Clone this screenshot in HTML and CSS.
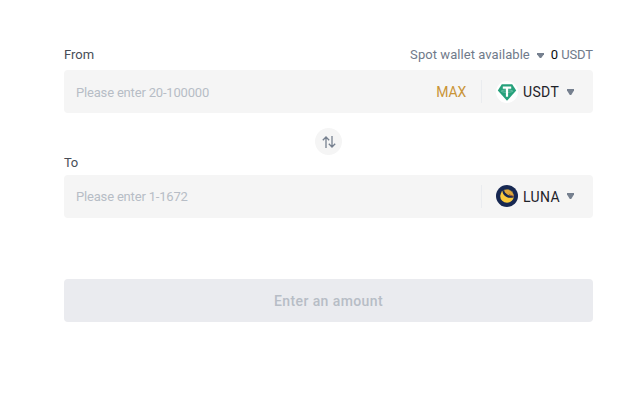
FILE: index.html
```html
<!DOCTYPE html>
<html lang="en">
<head>
    <meta charset="UTF-8">
    <meta name="viewport" content="width=device-width, initial-scale=1.0">
    <title>Convert</title>
    <link rel="stylesheet" href="styles.css">
</head>
<body>
    <div class="convert">
        <div class="row from-row">
            <span class="label">From</span>
            <div class="wallet">
                <span class="wallet-name">Spot wallet available</span>
                <svg class="caret-small" width="7" height="5" viewBox="0 0 7 5"><path d="M0 0h7v1.2L4.2 5H2.8L0 1.2z"/></svg>
                <span class="amount">0</span>
                <span class="unit">USDT</span>
            </div>
        </div>
        <div class="field">
            <input class="from-input" type="text" placeholder="Please enter 20-100000">
            <span class="max">MAX</span>
            <div class="coin">
                <svg class="logo" width="22" height="22" viewBox="0 0 22 22">
                    <circle cx="11" cy="11" r="11" fill="#fff"/>
                    <path d="M5.8 3.3h10.400l4 6.200L11 19.800 1.800 9.500z" fill="#26a17b"/>
                    <path d="M6.8 5.6h8.400v2.100h-3.100v8H9.900v-8H6.800z" fill="#fff"/>
                    <ellipse cx="11" cy="10.1" rx="5.8" ry="1.2" fill="none" stroke="#fff" stroke-width="0.6" opacity="0.5"/>
                </svg>
                <span class="coin-name">USDT</span>
                <svg class="caret" width="7" height="6" viewBox="0 0 7 6"><path d="M0 0h7v1.6L4.200 6H2.800L0 1.600z"/></svg>
            </div>
        </div>
        <div class="swap">
            <svg width="14" height="12" viewBox="0 0 14 12" fill="none" stroke="#76808f" stroke-width="1.3">
                <path d="M4 12V1M.8 4.2L4 1l3.200 3.200M10 0v11M6.800 7.800L10 11l3.200-3.200"/>
            </svg>
        </div>
        <div class="row to-row">
            <span class="label to-label">To</span>
        </div>
        <div class="field">
            <input class="to-input" type="text" placeholder="Please enter 1-1672">
            <div class="coin coin-to">
                <svg class="logo" width="22" height="22" viewBox="0 0 22 22">
                    <circle cx="11" cy="11" r="11" fill="#172852"/>
                    <circle cx="11" cy="11" r="6.8" fill="#fbcb3c"/>
                    <path d="M6.500 6C6.800 10.800 11.500 14 17.300 12.500c1-2.700-.8-6.200-3.600-7.700-2.400-1.200-5.400-.6-7.200 1.200z" fill="#172852"/>
                    <path d="M8 5.400c2.900-1.700 6.500-.7 8.400 2 .9 1.300 1.300 2.600 1.200 3.600-3.600.4-8.200-1.800-9.600-5.600z" fill="#e0a83a"/>
                    <path d="M12.500 8.500c1.500 1.100 3.300 1.900 5.200 2.200v1c-2.400 0-4.400-1.200-5.200-3.200z" fill="#8a4a38"/>
                </svg>
                <span class="coin-name">LUNA</span>
                <svg class="caret" width="7" height="6" viewBox="0 0 7 6"><path d="M0 0h7v1.6L4.200 6H2.800L0 1.600z"/></svg>
            </div>
        </div>
        <button class="submit" disabled>Enter an amount</button>
    </div>
</body>
</html>
```
FILE: styles.css
```css
body {
    margin: 0;
    background: #fff;
    font-family: Roboto, "Liberation Sans", sans-serif;
    font-size: 13px;
    color: #474d57;
}
.convert {
    width: 529px;
    padding: 46px 0 0 64px;
}
.row {
    display: flex;
    justify-content: space-between;
    align-items: center;
    line-height: 18px;
}
.from-row {
    height: 18px;
    margin-bottom: 6px;
}
.to-row {
    height: 16px;
    margin-bottom: 4px;
}
.to-label {
    letter-spacing: -0.5px;
}
.wallet {
    display: flex;
    align-items: center;
    color: #707a8a;
}
.wallet-name {
    letter-spacing: 0.06px;
}
.caret-small {
    margin: 0 7px;
    fill: #76808f;
}
.amount {
    margin-right: 3px;
    color: #0b0e11;
}
.unit {
    letter-spacing: -0.1px;
}
.field {
    display: flex;
    align-items: center;
    box-sizing: border-box;
    height: 43px;
    padding-left: 12px;
    background: #f5f5f5;
    border-radius: 4px;
}
.field input {
    flex: 1;
    min-width: 0;
    padding: 0;
    border: none;
    outline: none;
    background: transparent;
    font-family: inherit;
    font-size: 13px;
    letter-spacing: -0.18px;
}
.field .from-input {
    padding-top: 2px;
}
.field input::placeholder {
    color: #b7bdc6;
}
.max {
    margin-right: 15px;
    font-size: 14px;
    letter-spacing: -0.2px;
    color: #c99437;
}
.coin {
    display: flex;
    align-items: center;
    box-sizing: border-box;
    width: 112px;
    height: 23px;
    padding-left: 14px;
    border-left: 1px solid #eaecef;
}
.coin-name {
    width: 38px;
    margin-left: 5px;
    font-size: 14px;
    letter-spacing: 0.35px;
    color: #1e2329;
}
.caret {
    margin-left: 6px;
    fill: #76808f;
}
.coin-to .logo,
.coin-to .caret {
    margin-bottom: 2px;
}
.swap {
    display: flex;
    align-items: center;
    justify-content: center;
    width: 27px;
    height: 27px;
    margin: 15px auto 0;
    background: #f5f5f5;
    border-radius: 50%;
}
.submit {
    display: block;
    width: 100%;
    height: 43px;
    margin-top: 61px;
    padding: 0;
    border: none;
    border-radius: 4px;
    background: #eaebef;
    color: #b7bdc6;
    font-family: inherit;
    font-size: 14px;
    font-weight: 500;
    letter-spacing: 0.4px;
}
```
